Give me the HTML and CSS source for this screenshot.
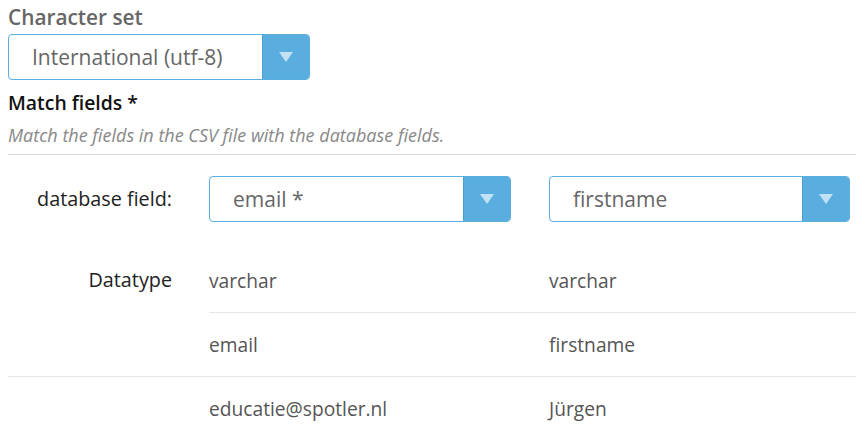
FILE: index.html
```html
<!DOCTYPE html>
<html>
<head>
<meta charset="utf-8">
<link rel="stylesheet" href="styles.css">
</head>
<body>
<div class="page">
  <div class="section-label">Character set</div>
  <div class="select select-charset">
    <span class="select-text">International (utf-8)</span>
    <span class="select-btn"><span class="arrow"></span></span>
  </div>
  <div class="heading">Match fields *</div>
  <div class="desc">Match the fields in the CSV file with the database fields.</div>
  <div class="rule"></div>

  <div class="match">
    <div class="label label-field">database field:</div>
    <div class="cell cell-select">
      <div class="select select-col1">
        <span class="select-text">email *</span>
        <span class="select-btn"><span class="arrow"></span></span>
      </div>
    </div>
    <div class="cell cell-select">
      <div class="select select-col2">
        <span class="select-text">firstname</span>
        <span class="select-btn"><span class="arrow"></span></span>
      </div>
    </div>

    <div class="label label-type">Datatype</div>
    <div class="cell data">varchar</div>
    <div class="cell data">varchar</div>
    <div class="cell data bordered">email</div>
    <div class="cell data bordered">firstname</div>

    <div class="cell data bordered"></div>
    <div class="cell data bordered">educatie@spotler.nl</div>
    <div class="cell data bordered">Jürgen</div>
  </div>
</div>
</body>
</html>
```

FILE: styles.css
```css
html, body {
  margin: 0;
  padding: 0;
  background: #fff;
}
body {
  font-family: "Open Sans", "Liberation Sans", sans-serif;
  overflow: hidden;
}
.page {
  padding: 4px 0 0 8px;
}
.section-label {
  font-size: 20.8px;
  font-weight: 600;
  color: #666;
  line-height: 26px;
}
.select {
  display: flex;
  height: 46px;
  box-sizing: border-box;
  border: 1px solid #5aafe1;
  border-radius: 4px;
  background: #fff;
  overflow: hidden;
}
.select-charset {
  width: 302px;
  margin-top: 4px;
}
.select-text {
  flex: 1;
  display: flex;
  align-items: center;
  padding-left: 23px;
  font-size: 21px;
  color: #666;
}
.select-btn {
  width: 46px;
  background: #5aaddf;
  border-left: 1px solid #4a9fd3;
  display: flex;
  align-items: center;
  justify-content: center;
}
.arrow {
  width: 0;
  height: 0;
  border-left: 7px solid transparent;
  border-right: 7px solid transparent;
  border-top: 10px solid #c3e1f4;
}
.heading {
  margin-top: 10px;
  font-size: 19.4px;
  font-weight: 600;
  color: #111;
  line-height: 26px;
}
.desc {
  margin-top: 7px;
  font-size: 18px;
  font-style: italic;
  color: #888;
  line-height: 24px;
}
.rule {
  margin-top: 7px;
  height: 1px;
  background: #d8d8d8;
}
.match {
  display: grid;
  grid-template-columns: 201px 340px 1fr;
  grid-template-rows: 72px 64px 64px 64px;
  margin-top: 21px;
}
.label {
  font-size: 19.8px;
  color: #222;
  text-align: right;
  padding-right: 37px;
}
.label-field {
  line-height: 46px;
}
.label-type {
  grid-row: span 2;
  padding-top: 19px;
  line-height: 26px;
}
.select-col1 {
  width: 302px;
}
.select-col2 {
  width: 301px;
}
.data {
  font-size: 19.2px;
  color: #555;
  display: flex;
  align-items: center;
}
.bordered {
  border-top: 1px solid #e6e6e6;
}
```
